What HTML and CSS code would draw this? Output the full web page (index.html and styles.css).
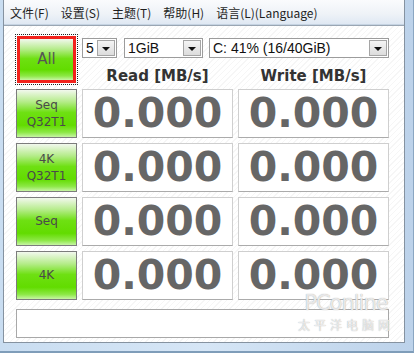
FILE: index.html
```html
<!doctype html>
<html lang="zh-CN">
<head>
    <meta charset="UTF-8">
    <title>CrystalDiskMark</title>
    <link rel="stylesheet" href="styles.css">
</head>
<body>
    <div class="window">
        <div class="client">
            <nav class="menu">
                <span class="menu--item">文件(F)</span>
                <span class="menu--item">设置(S)</span>
                <span class="menu--item">主题(T)</span>
                <span class="menu--item">帮助(H)</span>
                <span class="menu--item">语言(L)(Language)</span>
            </nav>
            <main class="panel">
                <div class="bench">
                    <div class="btn-focus">
                        <button class="btn btn--all">All</button>
                    </div>
                    <div class="head">
                        <div class="combos">
                            <div class="combo combo--count"><span class="combo--text">5</span><span class="combo--arrow"></span></div>
                            <div class="combo combo--size"><span class="combo--text">1GiB</span><span class="combo--arrow"></span></div>
                            <div class="combo combo--drive"><span class="combo--text">C: 41% (16/40GiB)</span><span class="combo--arrow"></span></div>
                        </div>
                        <div class="labels">
                            <div class="label">Read [MB/s]</div>
                            <div class="label">Write [MB/s]</div>
                        </div>
                    </div>

                    <button class="btn">Seq<br>Q32T1</button>
                    <div class="value">0.000</div>
                    <div class="value">0.000</div>

                    <button class="btn">4K<br>Q32T1</button>
                    <div class="value">0.000</div>
                    <div class="value">0.000</div>

                    <button class="btn">Seq</button>
                    <div class="value">0.000</div>
                    <div class="value">0.000</div>

                    <button class="btn">4K</button>
                    <div class="value">0.000</div>
                    <div class="value">0.000</div>
                </div>
                <div class="comment"></div>
                <div class="watermark">
                    <span class="watermark--logo">PConline</span>
                    <span class="watermark--cn">太平洋电脑网</span>
                </div>
            </main>
        </div>
    </div>
</body>
</html>
```

FILE: styles.css
```css
body {
    margin: 0;
    background: #c6dbf0;
}

.window {
    width: 414px;
    height: 353px;
    box-sizing: border-box;
    padding: 0 8px 9px 3px;
    background: linear-gradient(90deg, #c9ddf1 0%, #d6e6f6 50%, #bcd2ea 100%);
    border-bottom: 2px solid #7f9db9;
    border-right: 1px solid #8aa6c2;
}

.client {
    height: 100%;
    display: flex;
    flex-direction: column;
    border: 1px solid #8592a0;
    border-top: 0;
    background: #fff;
}

.menu {
    height: 24px;
    display: flex;
    align-items: center;
    padding-left: 6px;
    background: linear-gradient(#fafbfd, #eef2f7 60%, #dfe8f3);
    border-bottom: 1px solid #c5d3e2;
    font-family: "Noto Sans CJK SC", sans-serif;
    font-size: 12px;
    color: #1e1e1e;
}

.menu--item {
    margin-right: 12px;
}

.panel {
    position: relative;
    flex: 1;
    padding: 9px 0 0 12px;
    border-top: 1px solid #9aa6b3;
    background: repeating-linear-gradient(135deg, #ffffff 0 3px, #f6f6f6 3px 4px);
}

.bench {
    display: grid;
    grid-template-columns: 61px 151px 151px;
    grid-template-rows: repeat(5, 49px);
    gap: 5px;
}

.btn {
    margin: 0;
    padding: 0;
    border: 1px solid #7c7c7c;
    background: linear-gradient(#f2f8ee 0%, #b5ec8a 25%, #6ee012 48%, #62dc00 75%, #8ce845 90%, #c7f5a4 100%);
    font-family: "DejaVu Sans", sans-serif;
    font-size: 12px;
    line-height: 17px;
    color: #4a4a4a;
}

.btn-focus {
    margin: -1px;
    padding: 1px;
    border: 1px dotted #222;
    display: flex;
}

.btn--all {
    flex: 1;
    border: 3px solid #f2221c;
    font-size: 15px;
    color: #555;
}

.head {
    grid-column: 2 / 4;
    display: flex;
    flex-direction: column;
    justify-content: space-between;
    padding-top: 3px;
    margin-bottom: -1px;
}

.combos {
    display: flex;
}

.combo {
    height: 20px;
    box-sizing: border-box;
    display: flex;
    border: 1px solid #9c9c9c;
    background: #fff;
    font-family: "Liberation Sans", sans-serif;
    font-size: 14px;
    color: #111;
}

.combo--count {
    width: 35px;
}

.combo--size {
    width: 79px;
    margin-left: 7px;
}

.combo--drive {
    width: 180px;
    margin-left: 6px;
}

.combo--text {
    flex: 1;
    padding-left: 3px;
    line-height: 18px;
}

.combo--arrow {
    width: 16px;
    margin: 1px;
    border: 1px solid #a5a5a5;
    background: linear-gradient(#f4f4f4, #dcdcdc);
    position: relative;
}

.combo--arrow::after {
    content: "";
    position: absolute;
    left: 4px;
    top: 6px;
    border-left: 4px solid transparent;
    border-right: 4px solid transparent;
    border-top: 4px solid #111;
}

.labels {
    display: grid;
    grid-template-columns: 151px 151px;
    gap: 5px;
}

.label {
    text-align: center;
    font-family: "DejaVu Sans", sans-serif;
    font-weight: bold;
    font-size: 15px;
    color: #333;
}

.value {
    box-sizing: border-box;
    border: 1px solid #cfcfcf;
    border-bottom-color: #ababab;
    background: #fff;
    text-align: center;
    font-family: "DejaVu Sans", sans-serif;
    font-weight: bold;
    font-size: 41px;
    line-height: 47px;
    color: #666;
}

.comment {
    width: 373px;
    height: 29px;
    margin-top: 9px;
    box-sizing: border-box;
    border: 1px solid #a8a8a8;
    background: #fff;
}

/* watermark from the source screenshot, sits over the last row */
.watermark {
    position: absolute;
    right: 10px;
    bottom: 10px;
    display: flex;
    flex-direction: column;
    align-items: center;
    gap: 4px;
    color: rgba(255, 255, 255, 0.75);
    text-shadow: 0 0 1px #9a9a9a;
    font-family: "DejaVu Sans", sans-serif;
    pointer-events: none;
}

.watermark--logo {
    font-size: 21px;
    line-height: 22px;
    letter-spacing: -1px;
}

.watermark--cn {
    font-family: "Noto Sans CJK SC", sans-serif;
    font-size: 12px;
    line-height: 14px;
    letter-spacing: 4px;
}
```
